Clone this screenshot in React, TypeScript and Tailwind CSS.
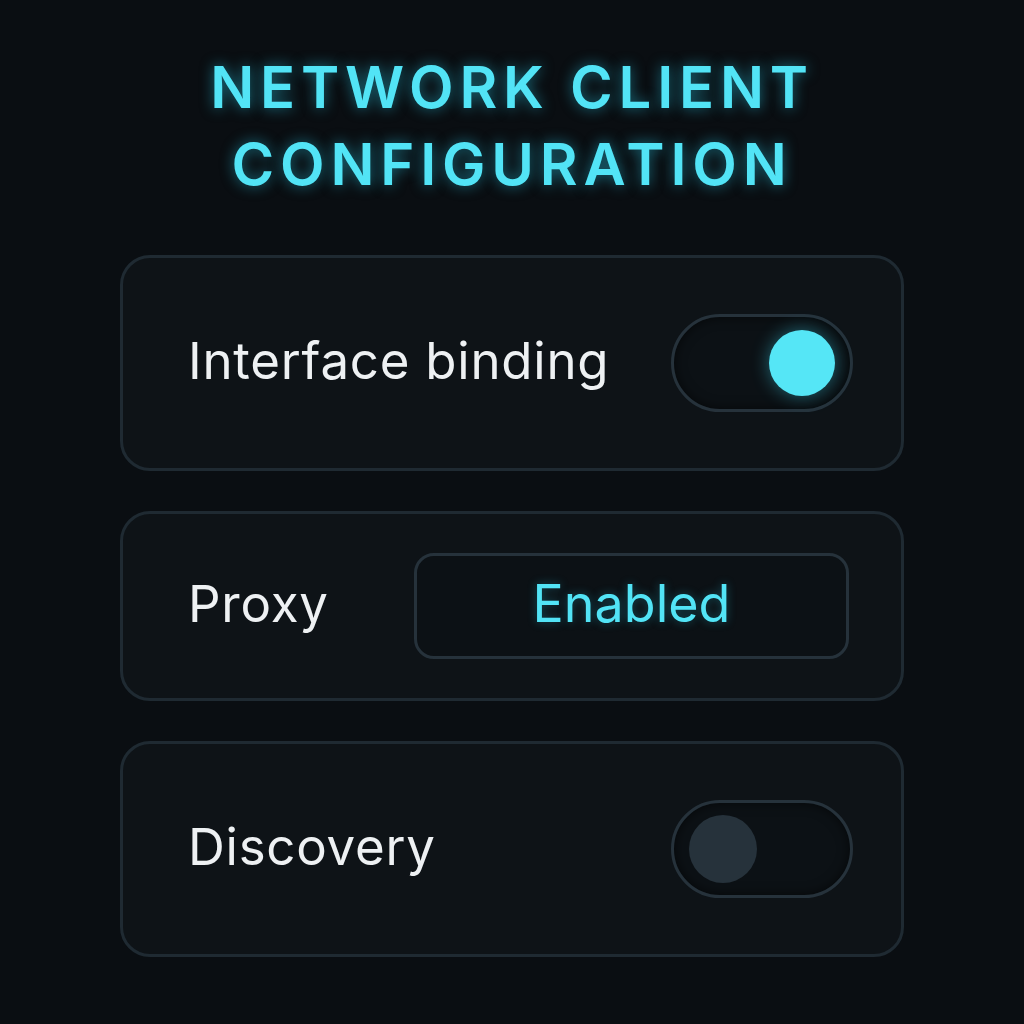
import React, { useState } from 'react';

// Toggle switch: pill track with a knob that glows when on
function Toggle({ on, onChange }: { on: boolean; onChange: () => void }) {
  return (
    <button
      onClick={onChange}
      className="flex h-[98px] w-[182px] items-center rounded-full border-[3px] border-[#26323b] bg-[#0c1115] px-[15px] shadow-[inset_0_0_12px_rgba(0,0,0,0.6)]"
    >
      <span
        className={
          on
            ? 'ml-auto block h-[66px] w-[66px] rounded-full bg-[#55e6f6] shadow-[0_0_18px_rgba(60,210,235,0.45)]'
            : 'block h-[68px] w-[68px] rounded-full bg-[#26323b]'
        }
      />
    </button>
  );
}

export default function App() {
  const [binding, setBinding] = useState(true);
  const [proxy, setProxy] = useState(true);
  const [discovery, setDiscovery] = useState(false);

  return (
    <div
      className="flex min-h-screen flex-col items-center bg-[#0a0e12] pt-[49px] text-[#eef1f3]"
      style={{ fontFamily: 'Inter, "Noto Sans", sans-serif' }}
    >
      {/* Heading */}
      <h1 className="text-center text-[58px] font-semibold uppercase leading-[77px] tracking-[0.1em] text-[#52e4f6] [text-shadow:0_0_14px_rgba(40,200,230,0.55)]">
        Network Client
        <br />
        Configuration
      </h1>

      {/* Settings cards */}
      <div className="mt-[52px] flex w-[784px] flex-col gap-[40px]">
        <div className="flex h-[216px] items-center justify-between rounded-[30px] border-[3px] border-[#1f2a32] bg-[#0e1317] pl-[65px] pr-[48px]">
          <span className="pb-[6px] text-[51px] leading-none tracking-[0.015em]">Interface binding</span>
          <Toggle on={binding} onChange={() => setBinding(!binding)} />
        </div>

        <div className="flex h-[190px] items-center rounded-[30px] border-[3px] border-[#1f2a32] bg-[#0e1317] pl-[65px] pr-[52px]">
          <span className="w-[226px] pb-[6px] text-[51px] leading-none tracking-[0.015em]">Proxy</span>
          <button
            onClick={() => setProxy(!proxy)}
            className="flex h-[106px] flex-1 items-center justify-center rounded-[20px] border-[3px] border-[#26323b] bg-[#0c1115] pb-[4px] text-[52px] text-[#52e4f6] [text-shadow:0_0_10px_rgba(40,200,230,0.35)]"
          >
            {proxy ? 'Enabled' : 'Disabled'}
          </button>
        </div>

        <div className="flex h-[216px] items-center justify-between rounded-[30px] border-[3px] border-[#1f2a32] bg-[#0e1317] pl-[65px] pr-[48px]">
          <span className="pb-[6px] text-[51px] leading-none tracking-[0.015em]">Discovery</span>
          <Toggle on={discovery} onChange={() => setDiscovery(!discovery)} />
        </div>
      </div>
    </div>
  );
}
